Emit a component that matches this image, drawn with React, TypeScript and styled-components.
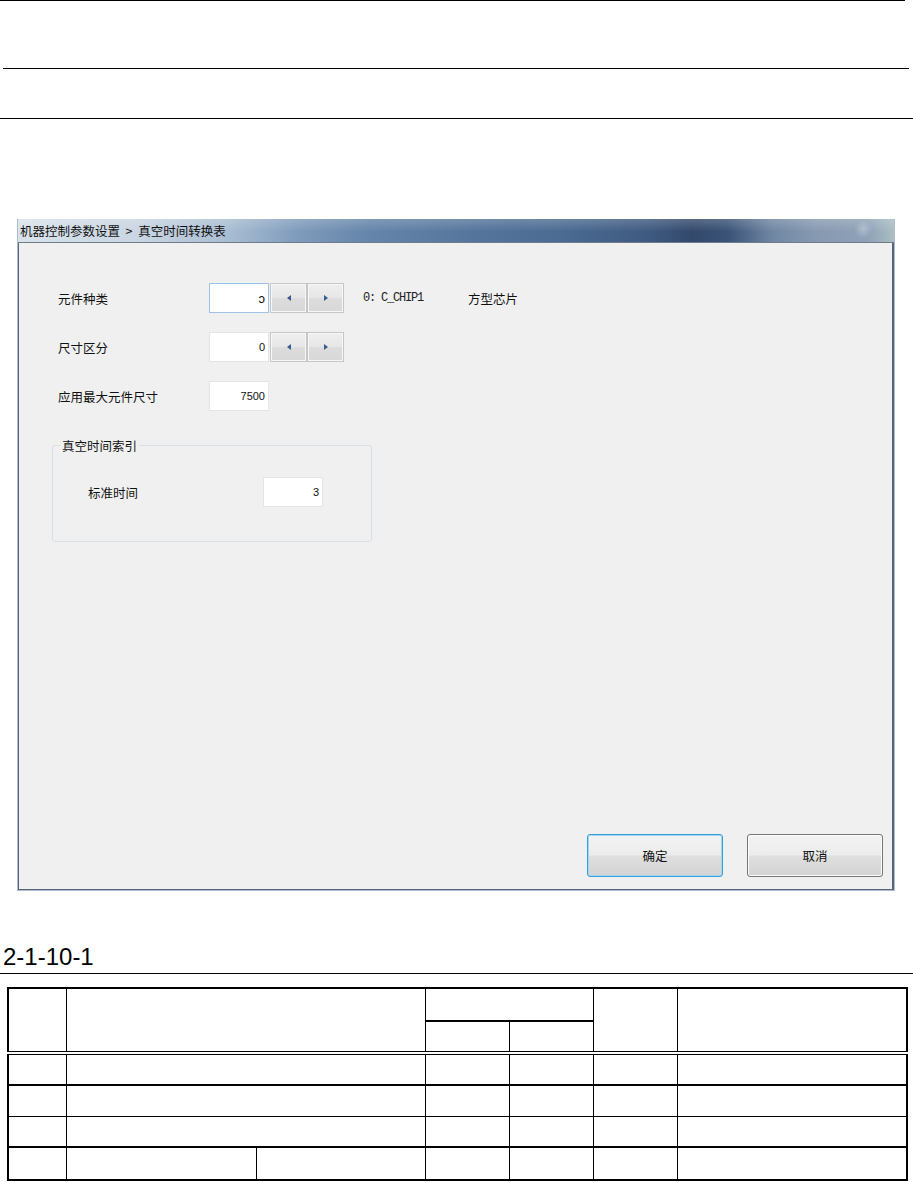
import React from 'react';
import styled, { createGlobalStyle } from 'styled-components';

const GlobalStyle = createGlobalStyle`
  html, body { margin: 0; padding: 0; background: #fff; }
  body { font-family: "Liberation Sans", "Noto Sans CJK SC", sans-serif; color: #000; }
`;

const CJK = `"Noto Sans CJK SC", "Liberation Sans", sans-serif`;

const Page = styled.div`
  width: 913px;
  height: 1182px;
  overflow: hidden;
  display: flex;
  flex-direction: column;
  background: #fff;
`;

const Rule = styled.div<{ $mt: number; $ml?: number; $mr?: number }>`
  height: 1px;
  background: #000;
  flex: none;
  margin: ${p => p.$mt}px ${p => p.$mr ?? 0}px 0 ${p => p.$ml ?? 0}px;
`;

/* ---------- dialog window ---------- */

const Window = styled.div`
  flex: none;
  box-sizing: border-box;
  margin: 100px 0 0 17px;
  width: 878px;
  height: 672px;
  display: flex;
  flex-direction: column;
  border: 1px solid #aebccb;
  border-top: none;
`;

const TitleBar = styled.div`
  flex: none;
  height: 23px;
  display: flex;
  align-items: center;
  padding-left: 2px;
  font: 12.5px ${CJK};
  color: #111;
  white-space: pre;
  border-bottom: 1px solid #6f7c8b;
  background:
    radial-gradient(circle at 96.5% 45%, rgba(255,255,255,0.28), rgba(255,255,255,0) 9px),
    linear-gradient(to bottom, rgba(255,255,255,0.18), rgba(255,255,255,0) 55%),
    linear-gradient(to right,
      #d9e2eb 0%, #c9d5e2 14%, #a9bdd2 24%, #7f9bbb 32%, #6585aa 40%,
      #55759c 52%, #4b6b92 62%, #3f5a80 72%, #33496b 77%, #3a5376 81%,
      #6f86a2 86%, #8799b1 91%, #8fa1b7 97%, #a9bfc3 100%);
`;

const Body = styled.div`
  flex: 1;
  display: flex;
  flex-direction: column;
  background: #f0f0f0;
  border: 1px solid #55657a;
  border-top: none;
  border-right-width: 2px;
  padding: 40px 9px 12px 33px;
`;

const Form = styled.div`
  display: flex;
  flex-direction: column;
  gap: 19px;
`;

const Row = styled.div<{ $labelWidth: number; $indent: number }>`
  display: flex;
  align-items: center;
  height: 30px;
  padding-left: ${p => p.$indent}px;
  & > span:first-child {
    width: ${p => p.$labelWidth}px;
    flex: none;
  }
`;

const Label = styled.span`
  font: 12.5px ${CJK};
  color: #111;
`;

const Field = styled.div<{ $focused?: boolean }>`
  box-sizing: border-box;
  flex: none;
  width: 60px;
  height: 30px;
  background: #fff;
  border: 1px solid ${p => (p.$focused ? '#9fc3e6' : '#e4e4e4')};
  display: flex;
  align-items: center;
  justify-content: flex-end;
  padding-right: 3px;
  font: ${p => (p.$focused ? '13px' : '11px')} "Liberation Sans", "DejaVu Sans", sans-serif;
  color: #111;
`;

const Spin = styled.div`
  display: flex;
  margin-left: 1px;
`;

const SpinButton = styled.div`
  box-sizing: border-box;
  width: 37px;
  height: 30px;
  border: 1px solid #c6c6c6;
  box-shadow: inset 0 0 0 1px #f7f7f7;
  background: linear-gradient(#efefef, #e6e6e6 50%, #dcdcdc 52%, #d8d8d8);
  display: flex;
  align-items: center;
  justify-content: center;
`;

const CodeText = styled.span`
  margin-left: 19px;
  width: 105px;
  font: 12px "Liberation Mono", "DejaVu Sans Mono", monospace;
  letter-spacing: -1.2px;
  color: #222;
  white-space: pre;
`;

const NameText = styled.span`
  font: 12.5px ${CJK};
  color: #111;
`;

const Group = styled.fieldset`
  margin: 26px 0 0 0;
  width: 320px;
  box-sizing: border-box;
  border: 1px solid #d8dfe6;
  border-radius: 3px;
  padding: 23px 0 34px 6px;
  min-width: 0;
`;

const Legend = styled.legend`
  padding: 0 2px 0 2px;
  margin-left: 1px;
  font: 12.5px ${CJK};
  color: #111;
  line-height: 17px;
`;

const ButtonBar = styled.div`
  margin-top: auto;
  display: flex;
  justify-content: flex-end;
  gap: 24px;
`;

const DialogButton = styled.div<{ $default?: boolean }>`
  box-sizing: border-box;
  width: 136px;
  height: 43px;
  border-radius: 3px;
  border: 1px solid ${p => (p.$default ? '#3a9dd8' : '#767676')};
  box-shadow: ${p => (p.$default ? 'inset 0 0 0 1px #9fd8f5' : 'inset 0 0 0 1px #fbfbfb')};
  background: linear-gradient(#f3f3f3, #ececec 48%, #dfdfdf 52%, #d3d3d3);
  display: flex;
  align-items: center;
  justify-content: center;
  font: 12.5px ${CJK};
  color: #111;
`;

/* ---------- caption & table ---------- */

const Caption = styled.div`
  margin-top: 54px;
  padding-left: 3px;
  font: 24px/24px "Liberation Sans", Arial, sans-serif;
  color: #000;
`;

const Table = styled.table`
  flex: none;
  margin: 13px 0 0 7px;
  width: 899px;
  border-collapse: collapse;
  table-layout: fixed;
  border: 2px solid #000;
`;

const TRow = styled.tr<{ $h: number }>`
  height: ${p => p.$h}px;
`;

const Cell = styled.td<{ $top?: string; $bottom?: string }>`
  border: 1px solid #000;
  padding: 0;
  ${p => (p.$top ? `border-top: ${p.$top};` : '')}
  ${p => (p.$bottom ? `border-bottom: ${p.$bottom};` : '')}
`;

const Arrow: React.FC<{ dir: 'left' | 'right' }> = ({ dir }) => (
  <svg width="4" height="6" viewBox="0 0 4 6">
    {dir === 'left' ? <path d="M4 0 L0 3 L4 6 Z" fill="#3b5a8e" /> : <path d="M0 0 L4 3 L0 6 Z" fill="#3b5a8e" />}
  </svg>
);

const SpinPair: React.FC = () => (
  <Spin>
    <SpinButton>
      <Arrow dir="left" />
    </SpinButton>
    <SpinButton>
      <Arrow dir="right" />
    </SpinButton>
  </Spin>
);

const bodyRows = [
  { h: 32, top: '4px double #000', bottom: '2px solid #000', split: false },
  { h: 31, bottom: '1px solid #000', split: false },
  { h: 31, bottom: '2px solid #000', split: false },
  { h: 33, split: true },
];

export default function App() {
  return (
    <>
      <GlobalStyle />
      <Page>
        <Rule $mt={0} $mr={8} />
        <Rule $mt={67} $ml={3} $mr={4} />
        <Rule $mt={49} />

        <Window>
          <TitleBar>{'机器控制参数设置  >  真空时间转换表'}</TitleBar>
          <Body>
            <Form>
              <Row $labelWidth={151} $indent={6}>
                <Label>元件种类</Label>
                <Field $focused>ɔ</Field>
                <SpinPair />
                <CodeText>0: C_CHIP1</CodeText>
                <NameText>方型芯片</NameText>
              </Row>
              <Row $labelWidth={151} $indent={6}>
                <Label>尺寸区分</Label>
                <Field>0</Field>
                <SpinPair />
              </Row>
              <Row $labelWidth={151} $indent={6}>
                <Label>应用最大元件尺寸</Label>
                <Field>7500</Field>
              </Row>
            </Form>

            <Group>
              <Legend>真空时间索引</Legend>
              <Row $labelWidth={175} $indent={29}>
                <Label>标准时间</Label>
                <Field>3</Field>
              </Row>
            </Group>

            <ButtonBar>
              <DialogButton $default>确定</DialogButton>
              <DialogButton>取消</DialogButton>
            </ButtonBar>
          </Body>
        </Window>

        <Caption>2-1-10-1</Caption>
        <Rule $mt={4} />

        <Table>
          <colgroup>
            <col style={{ width: 58 }} />
            <col style={{ width: 190 }} />
            <col style={{ width: 169 }} />
            <col style={{ width: 84 }} />
            <col style={{ width: 84 }} />
            <col style={{ width: 84 }} />
            <col style={{ width: 230 }} />
          </colgroup>
          <tbody>
            <TRow $h={33}>
              <Cell rowSpan={2} />
              <Cell rowSpan={2} colSpan={2} />
              <Cell colSpan={2} $bottom="2px solid #000" />
              <Cell rowSpan={2} />
              <Cell rowSpan={2} />
            </TRow>
            <TRow $h={32}>
              <Cell />
              <Cell />
            </TRow>
            {bodyRows.map((r, i) => (
              <TRow key={i} $h={r.h}>
                <Cell $top={r.top} $bottom={r.bottom} />
                {r.split ? (
                  <>
                    <Cell $top={r.top} $bottom={r.bottom} />
                    <Cell $top={r.top} $bottom={r.bottom} />
                  </>
                ) : (
                  <Cell colSpan={2} $top={r.top} $bottom={r.bottom} />
                )}
                <Cell $top={r.top} $bottom={r.bottom} />
                <Cell $top={r.top} $bottom={r.bottom} />
                <Cell $top={r.top} $bottom={r.bottom} />
                <Cell $top={r.top} $bottom={r.bottom} />
              </TRow>
            ))}
          </tbody>
        </Table>
      </Page>
    </>
  );
}
